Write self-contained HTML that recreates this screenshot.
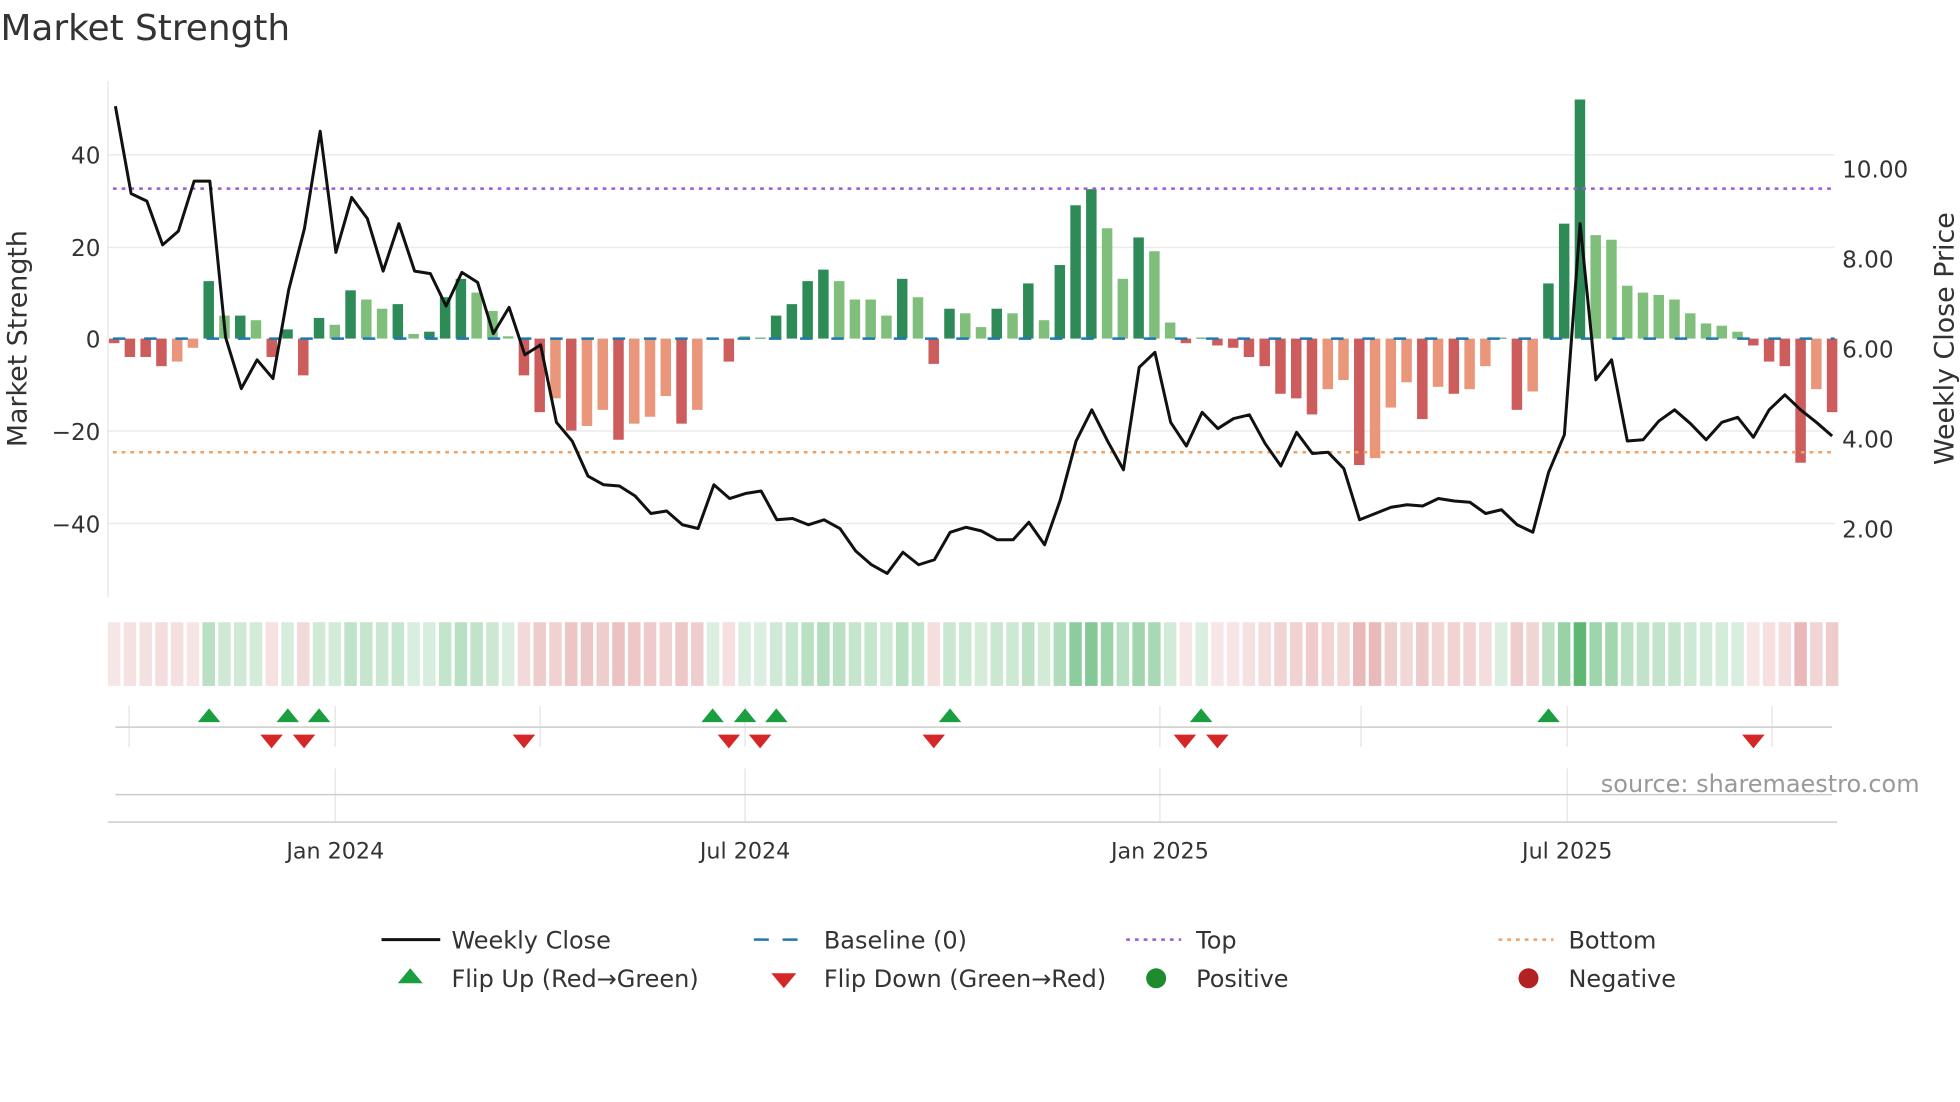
<!DOCTYPE html>
<html><head><meta charset="utf-8"><style>
html,body{margin:0;padding:0;background:#fff;}
svg{display:block;font-family:"DejaVu Sans","Liberation Sans",sans-serif;}
</style></head><body>
<svg id="s" width="1960" height="1102" viewBox="0 0 1568 882" xmlns="http://www.w3.org/2000/svg">
<rect width="1568" height="882" fill="#fff"/>
<text x="0" y="32" font-size="28.7" fill="#333">Market Strength</text>
<g stroke="#ebebeb" stroke-width="1.2">
<line x1="86" x2="1468" y1="124" y2="124"/><line x1="86" x2="1468" y1="198" y2="198"/>
<line x1="86" x2="1468" y1="345" y2="345"/><line x1="86" x2="1468" y1="419" y2="419"/>
</g>
<line x1="86" x2="86" y1="65" y2="478" stroke="#e6e6e6"/>
<g font-size="18.5" fill="#333" text-anchor="end">
<text x="80" y="131">40</text><text x="80" y="205">20</text><text x="80" y="278">0</text>
<text x="80" y="352">−20</text><text x="80" y="426">−40</text>
</g>
<g font-size="18.5" fill="#333">
<text x="1474" y="142">10.00</text><text x="1474" y="214">8.00</text><text x="1474" y="286">6.00</text>
<text x="1474" y="358">4.00</text><text x="1474" y="430">2.00</text>
</g>
<text transform="translate(21,271) rotate(-90)" font-size="21.5" fill="#333" text-anchor="middle">Market Strength</text>
<text transform="translate(1563,271) rotate(-90)" font-size="21.5" fill="#333" text-anchor="middle">Weekly Close Price</text>
<g id="bars"></g>
<line x1="90" x2="1468" y1="271" y2="271" stroke="#1f77b4" stroke-width="2" stroke-dasharray="10,15"/>
<line x1="90" x2="1468" y1="151" y2="151" stroke="#9b59d6" stroke-width="2" stroke-dasharray="3,4"/>
<line x1="90" x2="1468" y1="362" y2="362" stroke="#f0a060" stroke-width="2" stroke-dasharray="3,4"/>
<polyline id="price" fill="none" stroke="#111" stroke-width="2.4" stroke-linejoin="round"/>
<g id="strip"></g>
<g stroke="#e8e8e8" stroke-width="1.2">
<line x1="268" x2="268" y1="565" y2="598"/><line x1="596" x2="596" y1="565" y2="598"/>
<line x1="928" x2="928" y1="565" y2="598"/><line x1="1254" x2="1254" y1="565" y2="598"/>
<line x1="103" x2="103" y1="565" y2="598"/><line x1="432" x2="432" y1="565" y2="598"/><line x1="1089" x2="1089" y1="565" y2="598"/><line x1="1418" x2="1418" y1="565" y2="598"/>
<line x1="268" x2="268" y1="615" y2="658"/><line x1="596" x2="596" y1="615" y2="658"/>
<line x1="928" x2="928" y1="615" y2="658"/><line x1="1254" x2="1254" y1="615" y2="658"/>
</g>
<line x1="92" x2="1466" y1="582" y2="582" stroke="#ccc" stroke-width="1.2"/>
<line x1="92" x2="1466" y1="636" y2="636" stroke="#ccc" stroke-width="1.2"/>
<line x1="86" x2="1470" y1="658" y2="658" stroke="#ccc" stroke-width="1.2"/>
<g id="marks"></g>
<text x="1536" y="634" font-size="19.2" fill="#999" text-anchor="end">source: sharemaestro.com</text>
<g font-size="17.8" fill="#333" text-anchor="middle">
<text x="268" y="687">Jan 2024</text><text x="596" y="687">Jul 2024</text>
<text x="928" y="687">Jan 2025</text><text x="1254" y="687">Jul 2025</text>
</g>
<g font-size="19.2" fill="#333">
<line x1="305" x2="352" y1="752" y2="752" stroke="#111" stroke-width="2.4"/>
<text x="361" y="759">Weekly Close</text>
<line x1="603" x2="648" y1="752" y2="752" stroke="#1f77b4" stroke-width="2" stroke-dasharray="12,11"/>
<text x="659" y="759">Baseline (0)</text>
<line x1="901" x2="945" y1="752" y2="752" stroke="#9b59d6" stroke-width="2" stroke-dasharray="3,4"/>
<text x="957" y="759">Top</text>
<line x1="1199" x2="1243" y1="752" y2="752" stroke="#f0a060" stroke-width="2" stroke-dasharray="3,4"/>
<text x="1255" y="759">Bottom</text>
<polygon points="318,787 338,787 328,775" fill="#1a9e3f"/>
<text x="361" y="790">Flip Up (Red→Green)</text>
<polygon points="617,779 637,779 627,791" fill="#d62728"/>
<text x="659" y="790">Flip Down (Green→Red)</text>
<circle cx="925" cy="783" r="8" fill="#1f8a2e"/>
<text x="957" y="790">Positive</text>
<circle cx="1223" cy="783" r="8" fill="#b22222"/>
<text x="1255" y="790">Negative</text>
</g>
</svg>
<script>
var V=[-1,-4,-4,-6,-5,-2,12.5,5,5,4,-4,2,-8,4.5,3,10.5,8.5,6.5,7.5,1,1.5,9,13,10,6,0.5,-8,-16,-13,-20,-19,-15.5,-22,-18.5,-17,-12.5,-18.5,-15.5,0.2,-5,0.5,0.2,5,7.5,12.5,15,12.5,8.5,8.5,5,13,9,-5.5,6.5,5.5,2.5,6.5,5.5,12,4,16,29,32.5,24,13,22,19,3.5,-1,0.2,-1.5,-2,-4,-6,-12,-13,-16.5,-11,-9,-27.5,-26,-15,-9.5,-17.5,-10.5,-12,-11,-6,0.2,-15.5,-11.5,12,25,52,22.5,21.5,11.5,10,9.5,8.5,5.5,3.3,2.8,1.5,-1.5,-5,-6,-27,-11,-16];
var T=[0,0,0,0,1,1,0,1,0,1,0,0,0,0,1,0,1,1,0,1,0,0,0,1,1,1,0,0,1,0,1,1,0,1,1,1,0,1,0,0,1,0,0,0,0,0,1,1,1,1,0,1,0,0,1,1,0,1,0,1,0,0,0,1,1,0,1,1,0,0,0,0,0,0,0,0,0,1,1,0,1,1,1,0,1,0,1,1,0,0,1,0,0,0,1,1,1,1,1,1,1,1,1,1,0,0,0,0,1,0];
var ns="http://www.w3.org/2000/svg",b=document.getElementById('bars'),st=document.getElementById('strip');
function el(t,a,p){var e=document.createElementNS(ns,t);for(var k in a)e.setAttribute(k,a[k]);p.appendChild(e);return e;}
var n=V.length,x0=91,dx=(1466-91)/(n-1);
for(var i=0;i<n;i++){var v=V[i],x=x0+i*dx,h=Math.abs(v)*3.68,c;
 if(v>=0)c=T[i]?'#7fbf7b':'#2e8b57';else c=T[i]?'#e9967a':'#cd5c5c';
 el('rect',{x:x-4.2,y:v>=0?271-h:271,width:8.4,height:h,fill:c},b);
 var a=Math.min(1,0.22+Math.abs(v)/60);var col=v>=0?'rgba(40,160,70,'+(a*0.75)+')':'rgba(200,80,80,'+(a*0.6)+')';
 el('rect',{x:x-5,y:498,width:10,height:51,fill:col},st);}
var P=[85,155,161,196,185,145,145,270,311,288,303,232,183,105,202,158,175,217,179,217,219,245,218,226,267,246,284,276,338,353,381,388,389,397,411,409,420,423,388,399,395,393,416,415,420,416,423,441,452,459,442,452,448,426,422,425,432,432,418,436,400,353,328,353,376,294,282,338,357,330,343,335,332,355,373,346,363,362,375,416,411,406,404,405,399,401,402,411,408,420,426,378,348,179,304,288,353,352,337,328,339,352,338,334,350,328,316,328,338,349];
var pts=[];var m=P.length,px=(1466-92)/(m-1);for(var j=0;j<m;j++)pts.push((92+j*px).toFixed(1)+','+P[j]);
document.getElementById('price').setAttribute('points',pts.join(' '));
var mk=document.getElementById('marks');
[167,230,255,570,596,621,760,961,1239].forEach(function(x){el('polygon',{points:(x-9)+',578 '+(x+9)+',578 '+x+',567',fill:'#1a9e3f'},mk);});
[217,243,419,583,608,747,948,974,1403].forEach(function(x){el('polygon',{points:(x-9)+',588 '+(x+9)+',588 '+x+',599',fill:'#d62728'},mk);});
</script>
</body></html>
